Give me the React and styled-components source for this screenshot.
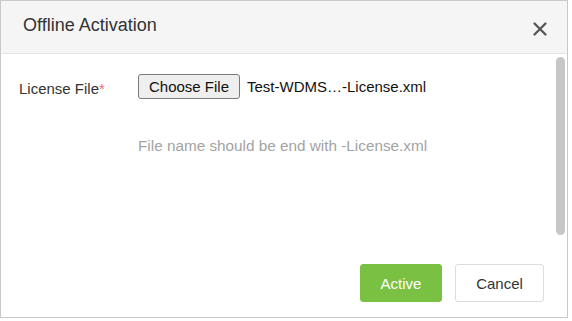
import styled, { createGlobalStyle } from "styled-components"

const GlobalStyle = createGlobalStyle`
  html, body {
    margin: 0;
    padding: 0;
    background: #ffffff;
    font-family: "Liberation Sans", Arial, sans-serif;
  }
`

function CloseIcon() {
  return (
    <svg width="16" height="16" viewBox="0 0 16 16">
      <path d="M2.5 2.5 L13.5 13.5 M13.5 2.5 L2.5 13.5" stroke="#555" strokeWidth="2.3" strokeLinecap="round" />
    </svg>
  )
}

export default function App() {
  return (
    <>
      <GlobalStyle />
      <Dialog>
        <Header>
          <Title>Offline Activation</Title>
          <CloseButton aria-label="close">
            <CloseIcon />
          </CloseButton>
        </Header>
        <Body>
          <Main>
            <FieldRow>
              <Label>
                License File<Required>*</Required>
              </Label>
              <ChooseButton type="button">Choose File</ChooseButton>
              <FileName>Test-WDMS…-License.xml</FileName>
            </FieldRow>
            <Hint>File name should be end with -License.xml</Hint>
            <Footer>
              <Button variant="primary">Active</Button>
              <Button>Cancel</Button>
            </Footer>
          </Main>
          <ScrollTrack>
            <ScrollThumb />
          </ScrollTrack>
        </Body>
      </Dialog>
    </>
  )
}

const Dialog = styled.div`
  width: 568px;
  height: 318px;
  box-sizing: border-box;
  border: 1px solid #c9c9c9;
  display: flex;
  flex-direction: column;
  background: #fff;
`

const Header = styled.div`
  height: 52px;
  flex: none;
  display: flex;
  align-items: center;
  justify-content: space-between;
  padding: 0 19px 0 22px;
  background: #f5f5f5;
  border-bottom: 1px solid #e6e6e6;
`

const Title = styled.h2`
  margin: 0 0 4px 0;
  font-size: 18px;
  font-weight: normal;
  color: #333;
`

const CloseButton = styled.button`
  border: none;
  background: none;
  padding: 0;
  display: flex;
  margin-top: 3px;
`

const Body = styled.div`
  flex: 1;
  display: flex;
  min-height: 0;
`

const Main = styled.div`
  flex: 1;
  display: flex;
  flex-direction: column;
  padding: 20px 12px 15px 18px;
`

const FieldRow = styled.div`
  display: flex;
  align-items: center;
  height: 25px;
`

const Label = styled.label`
  width: 119px;
  font-size: 15px;
  color: #333;
  padding-top: 4px;
`

const Required = styled.span`
  color: #f36c6c;
`

const ChooseButton = styled.button`
  height: 25px;
  width: 102px;
  box-sizing: border-box;
  padding: 0;
  font-family: "Liberation Sans", Arial, sans-serif;
  font-size: 15px;
  color: #111;
  background: #efefef;
  border: 1px solid #7a7a7a;
  border-radius: 3px;
`

const FileName = styled.span`
  margin-left: 7px;
  font-size: 15px;
  color: #111;
`

const Hint = styled.div`
  margin: 38px 0 0 119px;
  font-size: 15.3px;
  color: #a3a3a3;
`

const Footer = styled.div`
  margin-top: auto;
  display: flex;
  justify-content: flex-end;
  gap: 13px;
`

const Button = styled.button`
  height: 38px;
  min-width: ${(p) => (p.variant === "primary" ? "82px" : "89px")};
  box-sizing: border-box;
  font-family: "Liberation Sans", Arial, sans-serif;
  font-size: 15px;
  border-radius: 3px;
  border: 1px solid ${(p) => (p.variant === "primary" ? "#7ac143" : "#dcdcdc")};
  background: ${(p) => (p.variant === "primary" ? "#7ac143" : "#fff")};
  color: ${(p) => (p.variant === "primary" ? "#fff" : "#333")};
`

const ScrollTrack = styled.div`
  width: 11px;
  flex: none;
  padding-top: 3px;
`

const ScrollThumb = styled.div`
  width: 9px;
  height: 178px;
  border-radius: 5px;
  background: #c6c6c6;
`
